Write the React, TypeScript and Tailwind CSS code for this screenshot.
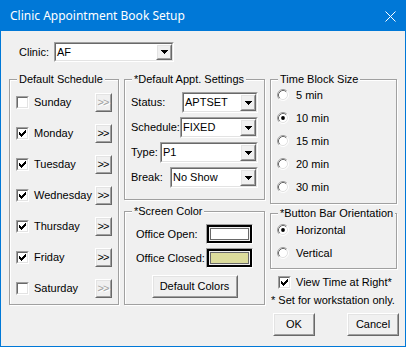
import React from "react";

const raisedOuter =
  "border border-t-white border-l-white border-r-[#696969] border-b-[#696969]";
const raisedInner =
  "border border-t-[#e3e3e3] border-l-[#e3e3e3] border-r-[#a0a0a0] border-b-[#a0a0a0]";
const sunkenOuter =
  "border border-t-[#a0a0a0] border-l-[#a0a0a0] border-r-white border-b-white";
const sunkenInner =
  "border border-t-[#696969] border-l-[#696969] border-r-[#e3e3e3] border-b-[#e3e3e3]";

function Raised({
  className = "",
  innerClass = "",
  children,
}: {
  className?: string;
  innerClass?: string;
  children?: React.ReactNode;
}) {
  return (
    <div className={`${raisedOuter} bg-[#f0f0f0] shrink-0 ${className}`}>
      <div
        className={`${raisedInner} w-full h-full flex items-center justify-center ${innerClass}`}
      >
        {children}
      </div>
    </div>
  );
}

function Select({ value, w, h = "h-[21px]" }: { value: string; w: string; h?: string }) {
  return (
    <div className={`${sunkenOuter} ${w} ${h} shrink-0`}>
      <div className={`${sunkenInner} w-full h-full bg-white flex`}>
        <div className="flex-1 pl-[1px] flex items-center leading-[13px]">{value}</div>
        <Raised className="w-[16px] h-full">
          <svg width="7" height="4" shapeRendering="crispEdges">
            <path d="M0 0H7V1H6V2H5V3H4V4H3V3H2V2H1V1H0Z" fill="#000" />
          </svg>
        </Raised>
      </div>
    </div>
  );
}

function Check({ checked }: { checked?: boolean }) {
  return (
    <div className={`${sunkenOuter} w-[13px] h-[13px] shrink-0`}>
      <div className={`${sunkenInner} w-full h-full bg-white flex items-center justify-center`}>
        {checked && (
          <svg width="7" height="7" shapeRendering="crispEdges">
            <g fill="#000">
              <rect x="6" y="0" width="1" height="1" />
              <rect x="5" y="1" width="2" height="1" />
              <rect x="0" y="2" width="1" height="1" />
              <rect x="4" y="2" width="3" height="1" />
              <rect x="0" y="3" width="2" height="1" />
              <rect x="3" y="3" width="3" height="1" />
              <rect x="0" y="4" width="5" height="1" />
              <rect x="1" y="5" width="3" height="1" />
              <rect x="2" y="6" width="1" height="1" />
            </g>
          </svg>
        )}
      </div>
    </div>
  );
}

function Radio({ checked }: { checked?: boolean }) {
  return (
    <svg width="12" height="12" className="shrink-0">
      <circle cx="6" cy="6" r="5" fill="#fff" />
      <path d="M2.11 9.89 A5.5 5.5 0 0 1 9.89 2.11" fill="none" stroke="#a0a0a0" strokeWidth="1" />
      <path d="M2.82 9.18 A4.5 4.5 0 0 1 9.18 2.82" fill="none" stroke="#696969" strokeWidth="1" />
      <path d="M2.11 9.89 A5.5 5.5 0 0 0 9.89 2.11" fill="none" stroke="#ffffff" strokeWidth="1" />
      <path d="M2.82 9.18 A4.5 4.5 0 0 0 9.18 2.82" fill="none" stroke="#e3e3e3" strokeWidth="1" />
      {checked && <circle cx="6" cy="6" r="1.9" fill="#000" />}
    </svg>
  );
}

function Group({
  title,
  className = "",
  children,
}: {
  title: string;
  className?: string;
  children?: React.ReactNode;
}) {
  return (
    <fieldset
      className={`border border-[#a0a0a0] shadow-[inset_1px_1px_0_#fff,1px_1px_0_#fff] min-w-0 ${className}`}
    >
      <legend className="ml-[7px] px-[2px] leading-[13px] bg-[#f0f0f0]">{title}</legend>
      {children}
    </fieldset>
  );
}

function Swatch({ color }: { color: string }) {
  return (
    <div className={`${sunkenOuter} w-[47px] h-[20px] shrink-0`}>
      <div className="w-full h-full border-2 border-black p-[1px] bg-[#f0f0f0]">
        <div className="w-full h-full border border-[#696969]" style={{ backgroundColor: color }} />
      </div>
    </div>
  );
}

const days: [string, boolean][] = [
  ["Sunday", false],
  ["Monday", true],
  ["Tuesday", true],
  ["Wednesday", true],
  ["Thursday", true],
  ["Friday", true],
  ["Saturday", false],
];

export default function App() {
  return (
    <div className="w-[406px] h-[347px] border border-[#0078d7] flex flex-col bg-[#f0f0f0] font-['Liberation_Sans',Arial,sans-serif] text-[11px] text-black leading-[13px]">
      {/* Title bar */}
      <div className="h-[30px] bg-[#0078d7] flex items-center pl-[9px] pr-[9px] text-white font-['Noto_Sans',sans-serif] text-[12px] shrink-0">
        <span className="pb-[1px]">Clinic Appointment Book Setup</span>
        <svg width="11" height="11" className="ml-auto" shapeRendering="auto">
          <path d="M0.5 0.5L10.5 10.5M10.5 0.5L0.5 10.5" stroke="#fff" strokeWidth="1" />
        </svg>
      </div>

      {/* Body */}
      <div className="flex-1 flex flex-col pl-[8px]">
        {/* Clinic row */}
        <div className="mt-[11px] flex items-center h-[20px]">
          <span className="ml-[10px] w-[35px]">Clinic:</span>
          <Select value="AF" w="w-[120px]" h="h-[20px]" />
        </div>

        {/* Columns */}
        <div className="mt-[11px] flex items-start">
          {/* Column 1 */}
          <Group title="Default Schedule" className="w-[110px] h-[232px]">
            <div className="pt-[1px] flex flex-col">
              {days.map(([d, c]) => (
                <div key={d} className="h-[31px] flex items-center pl-[6px] pr-[6px]">
                  <Check checked={c} />
                  <span className="ml-[5px] whitespace-nowrap">{d}</span>
                  <Raised className="ml-auto w-[17px] h-[19px]">
                    <span
                      className={`tracking-[-1px] pr-[1px] text-[11px] ${
                        c ? "text-black" : "text-[#a0a0a0] [text-shadow:1px_1px_0_#fff]"
                      }`}
                    >
                      &gt;&gt;
                    </span>
                  </Raised>
                </div>
              ))}
            </div>
          </Group>

          {/* Column 2 */}
          <div className="ml-[5px] w-[141px] flex flex-col gap-[5px]">
            <Group title="*Default Appt. Settings" className="h-[127px]">
              <div className="pt-[6px] px-[6px] flex flex-col gap-[4px]">
                <div className="h-[21px] flex items-center justify-between">
                  <span>Status:</span>
                  <Select value="APTSET" w="w-[76px]" />
                </div>
                <div className="h-[21px] flex items-center justify-between">
                  <span>Schedule:</span>
                  <Select value="FIXED" w="w-[78px]" />
                </div>
                <div className="h-[21px] flex items-center justify-between">
                  <span>Type:</span>
                  <Select value="P1" w="w-[98px]" />
                </div>
                <div className="h-[21px] flex items-center justify-between">
                  <span>Break:</span>
                  <Select value="No Show" w="w-[88px]" />
                </div>
              </div>
            </Group>
            <Group title="*Screen Color" className="h-[100px]">
              <div className="pt-[6px] px-[11px] flex flex-col">
                <div className="h-[20px] flex items-center justify-between">
                  <span>Office Open:</span>
                  <Swatch color="#ffffff" />
                </div>
                <div className="mt-[4px] h-[20px] flex items-center justify-between">
                  <span>Office Closed:</span>
                  <Swatch color="#dcdc9c" />
                </div>
                <div className="mt-[7px] flex justify-center">
                  <Raised className="w-[86px] h-[23px]">Default Colors</Raised>
                </div>
              </div>
            </Group>
          </div>

          {/* Column 3 */}
          <div className="ml-[5px] w-[127px] flex flex-col">
            <Group title="Time Block Size" className="h-[131px]">
              <div className="pl-[6px] flex flex-col gap-[5px]">
                {["5 min", "10 min", "15 min", "20 min", "30 min"].map((t) => (
                  <div key={t} className="h-[18px] flex items-center">
                    <Radio checked={t === "10 min"} />
                    <span className="ml-[7px]">{t}</span>
                  </div>
                ))}
              </div>
            </Group>
            <Group title="*Button Bar Orientation" className="mt-[3px] h-[62px]">
              <div className="pt-[1px] pl-[6px] flex flex-col gap-[5px]">
                <div className="h-[18px] flex items-center">
                  <Radio checked />
                  <span className="ml-[7px]">Horizontal</span>
                </div>
                <div className="h-[18px] flex items-center">
                  <Radio />
                  <span className="ml-[7px]">Vertical</span>
                </div>
              </div>
            </Group>
            <div className="mt-[7px] h-[13px] pl-[8px] flex items-center">
              <Check checked />
              <span className="ml-[5px] whitespace-nowrap">View Time at Right*</span>
            </div>
            <div className="mt-[5px] pl-[1px] whitespace-nowrap">* Set for workstation only.</div>
            <div className="mt-[6px] flex mr-[-2px]">
              <Raised className="ml-[3px] w-[42px] h-[23px]">OK</Raised>
              <Raised className="ml-auto w-[52px] h-[23px]">Cancel</Raised>
            </div>
          </div>
        </div>
      </div>
    </div>
  );
}
